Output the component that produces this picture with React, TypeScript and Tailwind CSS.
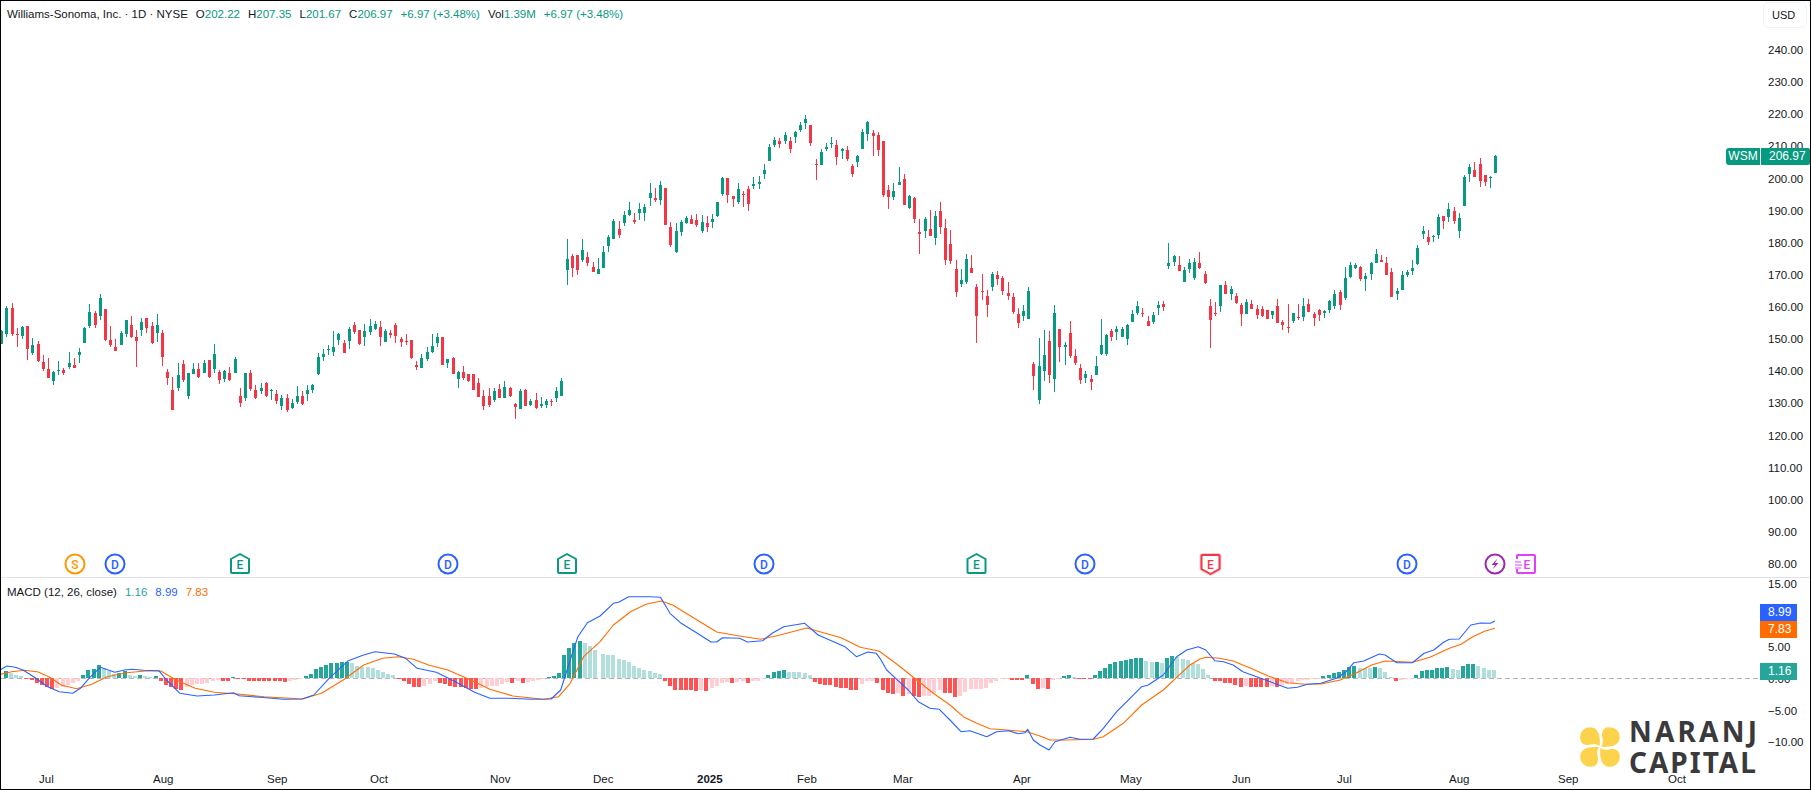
// Williams-Sonoma daily chart with MACD pane
const GREEN = "#089981";
const RED = "#f23645";

type Candle = { x: number; c: string; h: number; t: number; b: number; l: number };

// rows are "x colour high bodyTop bodyBottom low", measured in 3x crops, so ox/oy bring them back to page px
const parse = (ox: number, oy: number, rows: string): Candle[] =>
  rows
    .trim()
    .split("\n")
    .map((r) => {
      const p = r.trim().split(" ");
      return {
        x: ox + Number(p[0]) / 3,
        c: p[1] === "g" ? GREEN : RED,
        h: oy + Number(p[2]) / 3,
        t: oy + Number(p[3]) / 3,
        b: oy + Number(p[4]) / 3,
        l: oy + Number(p[5]) / 3,
      };
    });

const candles: Candle[] = [
  ...parse(0, 250, `
3 g 240 242 281 281
19 g 168 174 251 260
37 r 159 174 251 257
52 r 235 252 255 290
67 g 228 231 257 267
82 r 228 228 296 330
97 g 264 285 309 315
115 r 273 282 333 336
130 r 315 336 357 362
145 r 324 357 384 384
160 g 363 366 393 405
175 g 333 360 363 375
190 r 354 360 369 375
208 g 306 339 351 357
223 r 324 345 354 354
238 g 294 306 315 339
253 g 231 234 279 279
268 g 162 186 228 234
286 r 183 189 225 234
301 g 132 144 198 210
316 r 177 177 270 273
331 r 228 270 285 291
346 r 267 291 303 303
364 g 243 249 285 285
379 g 210 210 252 261
394 r 198 225 262 264
409 r 240 261 273 351
424 g 204 216 240 258
439 r 204 204 234 249
457 r 216 228 279 282
472 g 192 225 249 276
487 r 240 249 321 348
502 r 357 366 384 405
517 r 381 420 480 480
535 g 339 375 414 423
550 r 330 342 390 396
565 g 369 369 438 447
580 g 339 357 372 372
595 r 339 357 381 384
613 g 330 339 369 369
628 r 330 330 381 384
643 g 282 312 357 369
658 r 360 366 390 402
673 g 360 363 387 396
688 r 351 369 390 393
706 g 321 327 369 369
721 r 414 438 459 471
736 g 369 369 444 453
751 r 360 369 417 423
766 r 405 420 444 447
784 g 399 414 423 432
799 r 396 399 438 441
814 g 417 420 423 450
829 r 420 432 453 462
844 g 435 444 468 480
862 r 432 444 480 486
877 g 447 459 474 477
892 g 408 438 456 462
907 r 423 438 462 465
922 g 405 420 432 453
937 g 402 405 420 429
955 g 309 321 372 375
970 g 297 312 321 333
985 g 285 297 300 315
1000 g 243 291 306 318
1015 g 249 252 270 285
1033 r 270 279 309 309
1048 g 231 237 273 297
1063 r 216 225 246 252
1078 r 240 240 282 285
1093 g 222 243 261 288
1111 g 207 228 246 255
1126 g 213 222 237 240
1141 r 213 231 261 288
1156 g 237 243 276 276
1171 r 240 249 255 264
1186 r 219 225 258 279
1204 r 261 267 276 291
1219 r 252 273 276 285
1234 r 270 270 324 327
1249 r 333 345 351 360
1264 g 312 324 354 354
1282 g 291 306 327 333
1297 g 252 288 306 309
1312 g 249 261 279 291
1327 r 261 261 345 345
1342 g 327 327 339 354
1360 r 321 324 372 372
1375 g 363 366 387 414
1390 r 348 366 384 390
1405 r 372 372 393 396
1420 r 372 372 420 420
1435 r 384 399 441 441
1450 r 420 438 468 480
1468 r 414 438 465 471
1483 g 414 423 450 456
1498 r 402 417 444 444
`),
  ...parse(140, 385, `
1093 g -12 6 39 39
1111 r 6 9 33 36
1126 r 54 57 66 102
1141 g 12 18 72 72
1156 r 12 15 63 63
1171 g 42 48 60 63
1189 r 24 45 69 72
1204 g 36 57 63 69
1219 g 42 48 60 69
1234 r 42 47 50 63
1249 g 6 18 39 51
1264 g -20 -12 33 33
`),
  ...parse(480, 90, `
262 g 447 507 540 585
277 r 492 498 534 561
292 r 495 495 540 555
307 g 447 480 510 516
322 r 486 501 519 528
340 r 516 531 546 546
355 g 504 537 552 552
370 g 468 486 534 534
385 g 435 441 468 486
400 g 387 393 447 447
418 r 393 417 435 444
433 g 363 375 399 408
448 g 336 360 375 378
463 r 369 390 396 402
478 g 339 357 369 390
493 g 342 351 369 393
511 g 279 309 324 348
526 r 294 324 330 336
541 g 273 285 330 345
556 r 294 294 405 405
571 r 396 411 465 471
589 g 399 423 486 489
604 g 390 396 426 438
619 g 378 384 399 402
634 r 375 387 402 402
649 r 372 390 405 411
667 g 375 396 423 429
682 r 378 399 411 426
697 g 372 387 396 414
712 g 336 336 378 381
727 g 261 264 312 318
742 r 264 264 315 339
760 r 318 318 327 351
775 g 279 297 336 342
790 r 303 312 315 351
805 r 288 297 342 363
820 g 261 282 288 297
838 g 258 276 282 297
853 g 222 240 252 267
868 g 162 171 213 213
883 g 141 150 165 171
898 r 144 153 162 174
916 g 126 135 153 162
931 r 141 153 177 189
946 g 123 126 141 159
961 g 96 105 120 126
976 g 75 87 99 117
991 r 105 105 159 168
1009 r 207 222 225 270
1024 g 177 186 225 225
1039 g 159 171 177 183
1054 g 141 159 162 174
1069 r 150 165 201 225
1087 g 174 177 183 207
1102 r 168 180 207 213
1117 r 222 228 252 261
1132 g 195 198 216 231
1147 g 117 126 177 177
1162 g 93 96 132 153
1180 r 120 129 138 198
1195 r 126 135 180 198
1210 r 153 153 315 321
1225 r 285 300 321 357
1240 g 279 303 321 330
1258 g 231 276 285 285
1273 r 252 267 345 345
1288 g 315 318 354 357
1303 r 321 324 387 399
1318 r 387 426 432 492
1336 g 381 387 423 444
`),
  ...parse(880, 190, `
151 r 60 117 138 138
166 g 63 78 144 165
181 r 36 63 111 132
196 r 87 114 210 225
211 r 120 162 213 222
229 r 210 237 306 321
244 g 237 270 282 291
259 g 192 207 276 282
274 r 195 234 249 249
289 r 282 291 378 459
307 r 252 303 306 330
322 r 300 318 345 381
337 g 246 252 291 303
352 r 243 255 267 285
367 r 258 264 303 315
385 r 276 309 318 330
400 r 309 321 366 372
415 r 354 372 399 414
430 g 345 363 378 393
445 g 291 303 387 387
460 r 516 522 558 600
478 g 444 528 630 642
493 g 420 495 543 573
508 r 423 453 555 579
523 g 345 369 567 606
538 r 417 417 471 516
556 g 456 465 471 525
571 r 393 429 498 504
586 r 477 498 519 525
601 r 522 534 570 582
616 g 543 552 564 579
634 r 555 567 576 600
649 g 498 528 555 555
664 g 387 465 492 495
679 g 432 435 492 498
694 r 417 423 441 453
709 g 408 417 426 450
727 g 411 417 441 441
742 g 402 405 447 465
757 g 360 372 396 396
772 g 333 348 369 375
787 r 354 369 372 381
805 r 378 393 408 408
820 g 366 375 396 402
835 g 333 345 354 375
850 r 333 342 351 363
865 g 159 219 228 237
883 g 195 198 216 228
898 r 198 225 243 243
913 g 231 240 276 276
928 g 207 219 237 249
943 g 204 216 264 270
958 r 186 219 234 237
976 r 243 252 279 282
991 r 327 348 390 474
1006 r 336 369 372 378
1021 g 285 285 348 366
1036 r 273 285 312 312
1054 g 288 297 312 330
1069 r 309 318 339 342
1084 r 339 345 372 408
1099 g 327 336 372 372
1114 r 330 342 357 357
1132 r 345 357 375 387
1147 r 348 357 378 381
1162 r 360 360 387 387
1177 g 363 363 375 387
1192 r 327 348 399 399
1207 r 390 396 405 420
1225 r 342 411 414 429
1240 g 369 369 393 399
1255 r 342 381 384 390
1270 g 324 348 381 393
1285 r 327 342 366 366
1303 r 366 372 384 408
1318 r 357 360 375 393
1333 g 360 363 369 384
1348 g 330 333 360 369
`),
  ...parse(1300, 100, `
103 g 570 582 618 628
121 r 570 576 615 630
136 g 501 534 594 600
151 g 486 495 531 534
166 g 489 495 504 507
181 r 498 501 537 543
196 g 519 528 537 573
214 g 486 489 522 540
229 g 447 462 489 489
244 r 465 480 486 486
259 r 471 489 525 525
274 r 504 516 591 591
292 g 564 573 582 600
307 g 513 525 570 570
322 g 510 516 525 531
337 g 480 504 513 525
352 g 435 444 492 495
370 g 378 393 402 417
385 r 390 411 426 435
400 g 405 409 412 426
415 g 342 351 405 417
430 r 348 348 363 387
445 g 309 327 351 366
463 r 321 333 363 372
478 g 339 354 393 414
493 g 225 231 318 318
508 g 192 201 222 246
523 r 186 210 231 231
541 r 174 192 243 261
556 r 225 225 246 258
571 g 228 231 234 264
586 g 165 168 219 219
`),
];

// histogram heights in px above the zero line, one run per crop
const histRuns: { x0: number; hs: number[] }[] = [
  {
    x0: 5.7,
    hs: [
      7, 5.5, 3, 2, -1, -2, -5, -7, -9, -11, -10, -9, -7, -5, -3, 3, 8, 9, 13, 10, 7, 4, 5, 7, 3, 2, 3, 2, 1, 2, -3, -7,
      -9, -11, -12, -9, -7, -6, -6, -5, -3, -2, -3, -3, 1, -1, -1, -3, -3, -3, -3, -3, -3, -3, -4, -3, -2, -1, 2, 4, 9,
      11, 13, 15, 15, 16, 16, 15, 12, 11, 11, 10, 8, 6, 4, 3, -1, -3, -6, -9, -9, -8, -6, -3, -5, -6, -8, -9, -9, -10,
      -11, -11, -10, -9, -8, -8, -6, -4, -5, -3, -5, -4, -3, -2, -1, 1, 2, 5, 23, 30, 35, 37, 35, 32, 28,
    ],
  },
  {
    x0: 603,
    hs: [
      24, 23, 23, 19, 18, 16, 12, 10, 8, 7, 5, 4, -3, -8, -12, -12, -12, -12, -12.5, -12, -13, -10, -8, -5, -4, -5, -4,
      -3, -5, -3, -3, -1, 3, 6, 7, 8, 6, 6, 6, 5, 3, -4, -6, -7, -7, -9, -10, -10, -12, -12, -6, -3, -3, -5,
    ],
  },
  {
    x0: 882.7,
    hs: [
      -11.5, -15, -16, -15, -18, -16, -18, -19, -18, -18, -15, -12, -15, -15, -19, -18, -14, -11, -11, -11, -10, -5, -3,
      -1, -1, -2, -2, -2, 3, -6, -11, -10, -11, -2, -1, 2, 3, 1, -1, -1, -1, 3, 7, 10, 14, 16, 17, 18, 19, 20, 20, 17,
      16, 16.5, 15, 20, 22, 21, 19, 18, 15, 14, 9, 3,
    ],
  },
  {
    x0: 1214.8,
    hs: [
      -3, -3, -5, -5, -7, -9, -8, -9, -9, -9, -9, -8, -9, -7, -6, -5, -3, -2, -2, -1, -0.5, 2, 3, 5, 6, 8, 11, 12, 10,
      10, 10, 11, 10, 6, 1, -3, -2, -1, -1, 3, 7, 8, 8, 10, 10, 11, 9, 8, 12, 14, 14, 12, 10, 8, 8,
    ],
  },
];

const histBars = (() => {
  const out: { x: number; h: number; fill: string }[] = [];
  let prev = 0;
  let strong = true;
  histRuns.forEach((run) =>
    run.hs.forEach((h, i) => {
      if (h !== prev) strong = h > 0 ? h > prev : h < prev;
      const fill = h >= 0 ? (strong ? "#26a69a" : "#b2dfdb") : strong ? "#ff5252" : "#ffcdd2";
      out.push({ x: Math.round(run.x0 + i * 5.17), h, fill });
      prev = h;
    }),
  );
  return out;
})();

// line points from the crops: [scaleX, offsetX, offsetY, points]
const toPts = (sx: number, ox: number, oy: number, pts: number[][]) =>
  pts.map(([x, y]) => `${(ox + x / sx).toFixed(1)},${(oy + y / 3).toFixed(1)}`).join(" ");

const macdLine = [
  toPts(2.613, 0, 590, [
    [0, 240], [18, 228], [40, 232], [60, 240], [90, 262], [125, 290], [155, 305], [190, 310], [210, 295], [235, 262],
    [262, 232], [300, 247], [325, 240], [345, 238], [375, 241], [415, 242], [435, 270], [470, 310], [515, 318],
    [560, 315], [610, 308], [625, 317], [680, 322], [740, 328], [790, 327], [820, 315], [860, 265], [910, 212],
    [950, 195], [980, 185], [1030, 192], [1060, 205], [1090, 235], [1140, 247], [1190, 275], [1240, 307], [1280, 325],
    [1330, 325], [1390, 328], [1440, 327], [1465, 300], [1490, 210], [1510, 140], [1535, 98], [1568, 78],
  ]),
  toPts(2.613, 600, 470, [
    [35, 400], [50, 396], [75, 380], [130, 380], [158, 382], [183, 430], [210, 458], [250, 487], [290, 516], [305, 516],
    [320, 503], [365, 505], [385, 516], [425, 512], [450, 490], [480, 470], [535, 460], [570, 495], [600, 510],
    [640, 530], [670, 560], [700, 546], [722, 550],
  ]),
  toPts(3, 880, 340, [
    [0, 955], [20, 990], [50, 1018], [85, 1050], [115, 1085], [150, 1105], [178, 1108], [210, 1140], [243, 1175],
    [270, 1172], [320, 1190], [350, 1175], [385, 1172], [415, 1181], [435, 1178], [443, 1168], [460, 1200], [480, 1215],
    [507, 1230], [525, 1205], [570, 1192], [600, 1198], [640, 1197], [670, 1165], [710, 1115], [750, 1075], [785, 1040],
    [805, 1035], [850, 1005], [890, 950], [920, 930], [955, 920],
  ]),
  toPts(2.566, 1200, 470, [
    [15, 540], [38, 572], [60, 575], [85, 585], [110, 605], [140, 618], [180, 635], [225, 655], [250, 652], [275, 643],
    [310, 640], [350, 625], [375, 605], [395, 578], [420, 573], [460, 552], [475, 555], [505, 578], [545, 578],
    [575, 550], [600, 540], [625, 517], [640, 508], [665, 507], [695, 465], [720, 459], [745, 460], [757, 453],
  ]),
].join(" ");

const signalLine = [
  toPts(2.613, 0, 590, [
    [0, 253], [30, 245], [65, 241], [100, 246], [130, 262], [160, 285], [200, 296], [240, 283], [280, 260], [330, 248],
    [380, 243], [420, 243], [460, 270], [510, 295], [560, 307], [620, 312], [690, 320], [790, 327], [840, 310],
    [900, 268], [950, 225], [1000, 205], [1040, 200], [1080, 208], [1120, 225], [1170, 240], [1230, 270], [1280, 298],
    [1340, 318], [1420, 328], [1460, 320], [1490, 280], [1525, 200], [1568, 155],
  ]),
  toPts(2.613, 600, 470, [
    [35, 465], [80, 425], [120, 403], [160, 393], [190, 405], [240, 440], [305, 486], [360, 497], [420, 508], [470, 495],
    [540, 474], [630, 503], [680, 532], [725, 542],
  ]),
  toPts(3, 880, 340, [
    [0, 935], [50, 972], [110, 1020], [160, 1060], [210, 1095], [250, 1130], [290, 1150], [330, 1166], [380, 1170],
    [440, 1175], [480, 1188], [510, 1200], [560, 1200], [640, 1198], [670, 1190], [730, 1150], [785, 1095], [850, 1050],
    [890, 1012], [930, 975], [960, 957],
  ]),
  toPts(2.566, 1200, 470, [
    [15, 562], [50, 565], [85, 573], [130, 595], [175, 618], [225, 638], [270, 643], [310, 642], [360, 630], [400, 610],
    [440, 585], [475, 573], [545, 577], [590, 562], [640, 535], [670, 523], [700, 500], [730, 484], [757, 475],
  ]),
].join(" ");

const priceLabels = [
  "240.00", "230.00", "220.00", "210.00", "200.00", "190.00", "180.00", "170.00", "160.00",
  "150.00", "140.00", "130.00", "120.00", "110.00", "100.00", "90.00", "80.00",
];
const macdLabels = ["15.00", "10.00", "5.00", "0.00", "−5.00", "−10.00"];

const markerFont = { fontFamily: "Roboto, sans-serif", fontSize: 12, fontWeight: 500 };

function CircleMark({ x, letter, color }: { x: number; letter: string; color: string }) {
  return (
    <g>
      <circle cx={x} cy={564} r={9.5} fill="#fff" stroke={color} strokeWidth={2} />
      <text x={x} y={568.5} textAnchor="middle" fill={color} {...markerFont}>
        {letter}
      </text>
    </g>
  );
}

function HouseMark({ x }: { x: number }) {
  return (
    <g>
      <path
        d={`M${x} 554 L${x + 9} 559 V572 q0 1 -1 1 H${x - 8} q-1 0 -1 -1 V559 Z`}
        fill="#fff"
        stroke={GREEN}
        strokeWidth={2}
        strokeLinejoin="round"
      />
      <text x={x} y={569} textAnchor="middle" fill={GREEN} {...markerFont}>
        E
      </text>
    </g>
  );
}

function ShieldMark({ x }: { x: number }) {
  const d = `M${x - 9} 556 q0 -1 1 -1 H${x + 8} q1 0 1 1 V569 L${x} 574 L${x - 9} 569 Z`;
  return (
    <g>
      <path d={d} fill="#fff" stroke={RED} strokeOpacity={0.25} strokeWidth={4} strokeLinejoin="round" />
      <path d={d} fill="#fff" stroke={RED} strokeWidth={2} strokeLinejoin="round" />
      <text x={x} y={569} textAnchor="middle" fill={RED} {...markerFont}>
        E
      </text>
    </g>
  );
}

function Tag({ className, children }: { className: string; children: string }) {
  return (
    <div className={`absolute h-[17px] w-[37px] text-[12px] leading-[17px] text-white pl-[8px] ${className}`}>{children}</div>
  );
}

function Petal({ rotate }: { rotate: number }) {
  return (
    <path
      transform={`rotate(${rotate} 20 20)`}
      d="M19.6 19 C20.6 11 19.2 0.4 10.5 0.2 C3.5 0 -0.6 6 0.3 12 C1.2 18.2 7 18.6 11 17.6 C14 16.9 17 17 19.6 19 Z"
      fill="#fdd34d"
    />
  );
}

export default function App() {
  return (
    <div
      className="relative flex h-[790px] w-[1811px] flex-col overflow-hidden border border-black bg-white text-[#131722]"
      style={{ fontFamily: "'Liberation Sans', Arial, sans-serif" }}
    >
      {/* price pane */}
      <div className="relative flex h-[576px] shrink-0">
        <svg className="h-[576px] w-[1760px] shrink-0" viewBox="1 1 1760 576" shapeRendering="crispEdges">
          {candles.map((k, i) => {
            const cx = Math.round(k.x);
            return (
              <g key={i} fill={k.c}>
                <rect x={cx} y={k.h} width={1} height={Math.max(k.l - k.h, 1)} />
                <rect x={cx - 1} y={k.t} width={3} height={Math.max(k.b - k.t, 1)} />
              </g>
            );
          })}
          <g shapeRendering="geometricPrecision">
            <CircleMark x={75} letter="S" color="#ff9800" />
            <CircleMark x={115} letter="D" color="#2962ff" />
            <HouseMark x={240} />
            <CircleMark x={448} letter="D" color="#2962ff" />
            <HouseMark x={567} />
            <CircleMark x={764} letter="D" color="#2962ff" />
            <HouseMark x={976.5} />
            <CircleMark x={1085} letter="D" color="#2962ff" />
            <ShieldMark x={1210.5} />
            <CircleMark x={1407} letter="D" color="#2962ff" />
            <circle cx={1495} cy={564} r={9.5} fill="#fff" stroke="#9c27b0" strokeWidth={2} />
            <path d="M1497.5 558.5 L1491.5 565 H1495 L1492.5 569.5 L1498.5 563 H1495 Z" fill="#9c27b0" />
            <path
              d="M1517 559 V556 q0 -1 1 -1 H1534 q1 0 1 1 V572 q0 1 -1 1 H1518 q-1 0 -1 -1 V569"
              fill="#fff"
              stroke="#e040fb"
              strokeWidth={2}
            />
            <path d="M1515 562 H1521 M1515 565 H1522 M1515 568 H1521" stroke="#e040fb" strokeWidth={1} />
            <text x={1527} y={569} textAnchor="middle" fill="#e040fb" {...markerFont}>
              E
            </text>
          </g>
        </svg>

        <div className="flex w-[49px] shrink-0 flex-col">
          <div className="ml-[2px] mt-[1px] flex h-[26px] w-[44px] shrink-0 items-center rounded-md border border-[#f0f3fa] pl-[8px] text-[11px]">
            USD
          </div>
          <div className="mt-[6.6px] flex flex-col pl-[7px]">
            {priceLabels.map((p) => (
              <div key={p} className="flex h-[32.13px] shrink-0 items-center text-[11.5px]">
                {p}
              </div>
            ))}
          </div>
        </div>

        <div className="absolute left-[6px] top-[5px] flex gap-[8px] text-[11.5px] leading-[16px]">
          <span>Williams-Sonoma, Inc. · 1D · NYSE</span>
          <span>
            O<span className="text-[#089981]">202.22</span>
          </span>
          <span>
            H<span className="text-[#089981]">207.35</span>
          </span>
          <span>
            L<span className="text-[#089981]">201.67</span>
          </span>
          <span>
            C<span className="text-[#089981]">206.97</span>
          </span>
          <span className="text-[#089981]">+6.97 (+3.48%)</span>
          <span>
            Vol<span className="text-[#089981]">1.39M</span>
          </span>
          <span className="text-[#089981]">+6.97 (+3.48%)</span>
        </div>

        <div className="absolute left-[1725px] top-[147px] flex h-[17px] text-[12px] leading-[17px] text-white">
          <div className="w-[34px] rounded-l-[3px] bg-[#089981] text-center">WSM</div>
          <div className="ml-px w-[49px] rounded-r-[2px] bg-[#089981] pl-[8px]">206.97</div>
        </div>
      </div>

      <div className="h-px shrink-0 bg-[#e0e3eb]" />

      {/* macd pane */}
      <div className="relative flex h-[191px] shrink-0">
        <svg className="h-[191px] w-[1760px] shrink-0" viewBox="1 578 1760 191">
          <line x1={1} x2={1761} y1={678.5} y2={678.5} stroke="#b2b5be" strokeDasharray="5 3" strokeWidth={1} />
          <g shapeRendering="crispEdges">
            {histBars.map((b, i) => (
              <rect
                key={i}
                x={b.x - 2}
                y={b.h >= 0 ? 678 - b.h : 678}
                width={4}
                height={Math.abs(b.h)}
                fill={b.fill}
              />
            ))}
          </g>
          <polyline points={signalLine} fill="none" stroke="#ff6d00" strokeWidth={1.1} strokeLinejoin="round" />
          <polyline points={macdLine} fill="none" stroke="#2962ff" strokeWidth={1.1} strokeLinejoin="round" />
        </svg>

        <div className="flex w-[49px] shrink-0 flex-col gap-[19.7px] pl-[7px]">
          {macdLabels.map((m) => (
            <div key={m} className="h-3 shrink-0 text-[11.5px] leading-3">
              {m}
            </div>
          ))}
        </div>

        <div className="absolute left-[6px] top-[6px] flex gap-[8px] text-[11.5px] leading-[16px]">
          <span>MACD (12, 26, close)</span>
          <span className="text-[#26a69a]">1.16</span>
          <span className="text-[#2962ff]">8.99</span>
          <span className="text-[#ff6d00]">7.83</span>
        </div>

        <Tag className="left-[1759px] top-[26px] bg-[#2962ff]">8.99</Tag>
        <Tag className="left-[1759px] top-[43px] bg-[#ff6d00]">7.83</Tag>
        <Tag className="left-[1759px] top-[85px] bg-[#26a69a]">1.16</Tag>
      </div>

      {/* time axis */}
      <div className="flex h-[20px] shrink-0 items-center pl-[38px] pt-[1px] text-[11.5px]">
        <div className="w-[114px] shrink-0">Jul</div>
        <div className="w-[114px] shrink-0">Aug</div>
        <div className="w-[103px] shrink-0">Sep</div>
        <div className="w-[120px] shrink-0">Oct</div>
        <div className="w-[103px] shrink-0">Nov</div>
        <div className="w-[104px] shrink-0">Dec</div>
        <div className="w-[100px] shrink-0 font-bold">2025</div>
        <div className="w-[96px] shrink-0">Feb</div>
        <div className="w-[120px] shrink-0">Mar</div>
        <div className="w-[107px] shrink-0">Apr</div>
        <div className="w-[112px] shrink-0">May</div>
        <div className="w-[105px] shrink-0">Jun</div>
        <div className="w-[112px] shrink-0">Jul</div>
        <div className="w-[109px] shrink-0">Aug</div>
        <div className="w-[110px] shrink-0">Sep</div>
        <div className="w-[30px] shrink-0">Oct</div>
      </div>

      {/* watermark */}
      <div className="absolute left-[1579px] top-[715px] flex items-center gap-[9px]">
        <svg className="h-[40px] w-[40px]" viewBox="0 0 40 40">
          <Petal rotate={0} />
          <Petal rotate={90} />
          <Petal rotate={180} />
          <Petal rotate={270} />
        </svg>
        <div
          className="flex flex-col text-[28px] font-bold leading-[31px] text-[#3a3a3c]"
          style={{ fontFamily: "'Noto Sans', sans-serif" }}
        >
          <span className="tracking-[3.2px]">NARANJ</span>
          <span className="tracking-[2px]">CAPITAL</span>
        </div>
      </div>
    </div>
  );
}
